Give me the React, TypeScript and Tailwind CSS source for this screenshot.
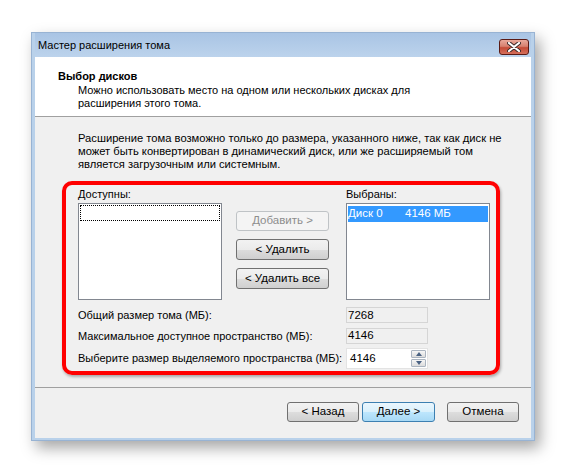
import React from "react";

const FONT = { fontFamily: '"Liberation Sans", Arial, sans-serif' };

function WinButton({
  label,
  w,
  h = 20,
  variant = "normal",
}: {
  label: string;
  w: number;
  h?: number;
  variant?: "normal" | "disabled" | "default";
}) {
  if (variant === "disabled") {
    return (
      <div
        className="flex items-center justify-center rounded-[3px] border border-[#bfc3c6] bg-[#f4f4f4] text-[11.5px] text-[#8d8d8d]"
        style={{ width: w, height: h }}
      >
        {label}
      </div>
    );
  }
  const skin =
    variant === "default"
      ? "border-[#3c7fb1] bg-[linear-gradient(to_bottom,#eaf6fd_0%,#d9f0fc_50%,#bee6fd_50%,#a7d9f5_100%)]"
      : "border-[#707070] bg-[linear-gradient(to_bottom,#f2f2f2_0%,#ebebeb_50%,#dddddd_50%,#cfcfcf_100%)]";
  return (
    <div
      className={`flex items-center justify-center rounded-[3px] border text-[11.5px] text-black ${skin}`}
      style={{ width: w, height: h }}
    >
      {label}
    </div>
  );
}

function CloseButton() {
  return (
    <div className="mr-[2px] mt-[6px] flex h-[16px] w-[30px] items-center justify-center self-start rounded-[3px] border border-[#5a1a14] bg-[linear-gradient(to_bottom,#e9a99b_0%,#d7806f_45%,#c44a36_55%,#d5705c_100%)]">
      <svg width="14" height="10" viewBox="0 0 14 10">
        <path d="M2 1 L12 9 M12 1 L2 9" stroke="#3b2a2a" strokeWidth="4" strokeLinecap="round" />
        <path d="M2 1 L12 9 M12 1 L2 9" stroke="#ffffff" strokeWidth="2.2" strokeLinecap="round" />
      </svg>
    </div>
  );
}

function ReadOnlyField({ value }: { value: string }) {
  return (
    <div className="flex h-[16px] w-[82px] items-center border border-[#d5d5d5] bg-[#f0f0f0] pl-[1px] text-[11.5px] text-black">
      {value}
    </div>
  );
}

function Spin({ value }: { value: string }) {
  return (
    <div className="flex h-[21px] w-[82px] items-center border border-[#e3e3e3] bg-white text-[11.5px] text-black">
      <span className="flex-1 pl-[3px]">{value}</span>
      <div className="flex h-full w-[16px] flex-col gap-px py-[1px] pr-[1px]">
        <div className="flex flex-1 items-center justify-center rounded-[1px] border border-[#aab4c0] bg-[linear-gradient(to_bottom,#f6f6f6,#dcdcdc)]">
          <svg width="6" height="4" viewBox="0 0 6 4">
            <path d="M0 4 L3 0 L6 4 Z" fill="#4a6283" />
          </svg>
        </div>
        <div className="flex flex-1 items-center justify-center rounded-[1px] border border-[#aab4c0] bg-[linear-gradient(to_bottom,#f6f6f6,#dcdcdc)]">
          <svg width="6" height="4" viewBox="0 0 6 4">
            <path d="M0 0 L3 4 L6 0 Z" fill="#4a6283" />
          </svg>
        </div>
      </div>
    </div>
  );
}

export default function App() {
  return (
    <div className="h-[473px] w-[568px] bg-white pl-[31px] pt-[32px]" style={FONT}>
      <div className="flex h-[409px] w-[504px] flex-col border border-[#98b3d3] bg-[#b9d1ea] px-[3px] pb-[2px] shadow-[5px_7px_14px_rgba(0,0,0,0.35)]">
        {/* title bar */}
        <div className="flex h-[24px] items-center justify-between bg-[linear-gradient(to_bottom,#a9c4e4,#bcd3ec)] pl-[3px]">
          <span className="text-[11px] text-black">Мастер расширения тома</span>
          <CloseButton />
        </div>

        {/* client area */}
        <div className="flex flex-1 flex-col bg-[#f0f0f0] whitespace-nowrap">
          <div className="h-[60px] border-b border-[#a0a0a0] bg-white pl-[23px] pt-[12px]">
            <div className="text-[11px] font-bold leading-[15px] text-black">Выбор дисков</div>
            <div className="pl-[20px] text-[11px] leading-[13px] text-black">
              Можно использовать место на одном или нескольких дисках для
              <br />
              расширения этого тома.
            </div>
          </div>

          <div className="h-[271px] border-b border-[#a0a0a0] pl-[27px] pt-[15px]">
            <p className="pl-[16px] text-[11.2px] leading-[13px] text-black">
              Расширение тома возможно только до размера, указанного ниже, так как диск не
              <br />
              может быть конвертирован в динамический диск, или же расширяемый том
              <br />
              является загрузочным или системным.
            </p>

            <div className="mt-[10px] h-[194px] w-[438px] rounded-[10px] border-4 border-[#ff0000] pl-[12px] pt-[3px] shadow-[1px_2px_3px_rgba(0,0,0,0.3)]">
              <div className="flex">
                <div className="flex flex-col">
                  <span className="text-[11px] leading-[13px] text-black">Доступны:</span>
                  <div className="mt-[2px] h-[97px] w-[144px] border border-[#828790] bg-white p-[1px]">
                    <div className="h-[16px] border border-dotted border-black" />
                  </div>
                </div>
                <div className="ml-[14px] mt-[23px] flex flex-col gap-[8px]">
                  <WinButton label="Добавить >" w={93} variant="disabled" />
                  <WinButton label="< Удалить" w={93} h={21} />
                  <WinButton label="< Удалить все" w={93} h={21} />
                </div>
                <div className="ml-[17px] flex flex-col">
                  <span className="text-[11px] leading-[13px] text-black">Выбраны:</span>
                  <div className="mt-[2px] h-[97px] w-[144px] border border-[#828790] bg-white px-[1px] pt-[2px]">
                    <div className="flex h-[16px] items-center bg-[#3399ff] text-[11.5px] text-white">
                      <span className="w-[57px]">Диск 0</span>
                      <span>4146 МБ</span>
                    </div>
                  </div>
                </div>
              </div>

              <div className="mt-[7px] flex flex-col gap-[4px] text-[11px] text-black">
                <div className="flex items-center">
                  <span className="w-[268px]">Общий размер тома (МБ):</span>
                  <ReadOnlyField value="7268" />
                </div>
                <div className="flex items-center">
                  <span className="w-[268px]">Максимальное доступное пространство (МБ):</span>
                  <ReadOnlyField value="4146" />
                </div>
                <div className="flex items-center">
                  <span className="w-[268px]">Выберите размер выделяемого пространства (МБ):</span>
                  <Spin value="4146" />
                </div>
              </div>
            </div>
          </div>

          <div className="flex flex-1 items-start justify-end pr-[12px] pt-[14px]">
            <WinButton label="< Назад" w={72} />
            <div className="ml-[3px]">
              <WinButton label="Далее >" w={73} variant="default" />
            </div>
            <div className="ml-[12px]">
              <WinButton label="Отмена" w={72} />
            </div>
          </div>
        </div>
      </div>
    </div>
  );
}
